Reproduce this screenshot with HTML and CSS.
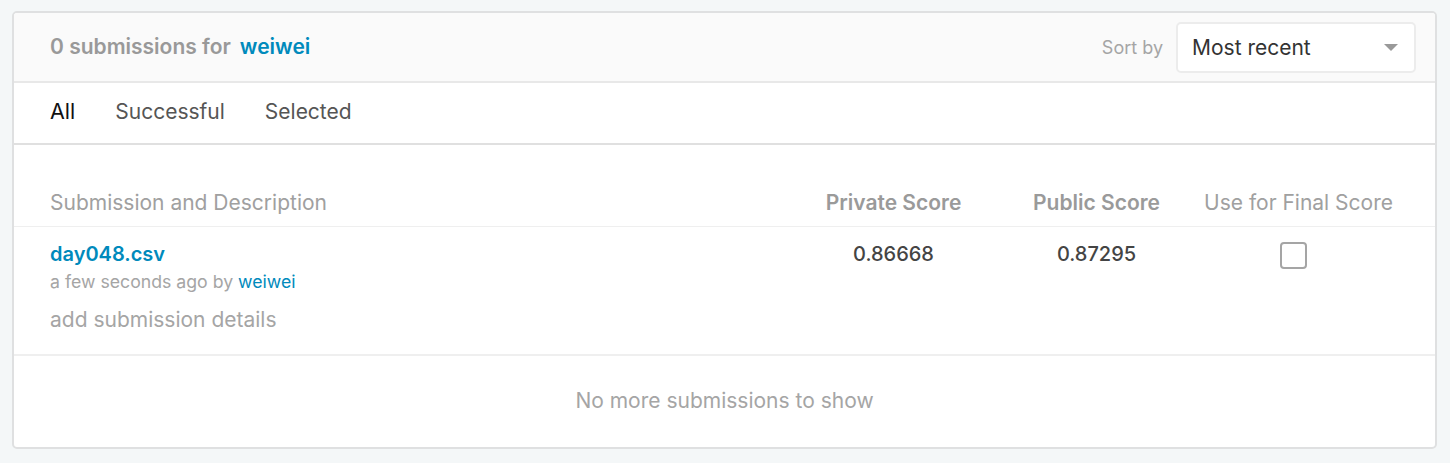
FILE: index.html
```html
<!DOCTYPE html>
<html>
<head>
<meta charset="utf-8">
<link rel="stylesheet" href="styles.css">
</head>
<body>
<div class="card">
  <div class="card-head">
    <div class="title"><span class="count">0 submissions for</span><a class="user">weiwei</a></div>
    <div class="sort">
      <span class="sort-label">Sort by</span>
      <div class="select"><span>Most recent</span><span class="caret"></span></div>
    </div>
  </div>
  <div class="tabs">
    <span class="tab active">All</span>
    <span class="tab">Successful</span>
    <span class="tab">Selected</span>
  </div>
  <div class="table">
    <div class="thead">
      <div class="c-desc">Submission and Description</div>
      <div class="c-priv strong">Private Score</div>
      <div class="c-pub strong">Public Score</div>
      <div class="c-use">Use for Final Score</div>
    </div>
    <div class="trow">
      <div class="c-desc">
        <a class="file">day048.csv</a>
        <div class="meta">a few seconds ago by <a class="metauser">weiwei</a></div>
        <div class="details">add submission details</div>
      </div>
      <div class="c-priv score">0.86668</div>
      <div class="c-pub score">0.87295</div>
      <div class="c-use"><span class="checkbox"></span></div>
    </div>
  </div>
  <div class="footer">No more submissions to show</div>
</div>
</body>
</html>
```

FILE: styles.css
```css
html, body {
  margin: 0;
  padding: 0;
  background: #f4f7f8;
  font-family: Inter, "Noto Sans", sans-serif;
}
body {
  padding: 11px 13px 12px 12px;
}
.card {
  background: #fff;
  border: 2px solid #dfe0e1;
  border-radius: 5px;
  overflow: hidden;
}
.card-head {
  height: 68px;
  background: #fafafa;
  border-bottom: 2px solid #e8e8e8;
  display: flex;
  align-items: center;
  justify-content: space-between;
  padding: 0 19px 0 36px;
}
.title {
  font-size: 21px;
  font-weight: 600;
  color: #999;
  display: flex;
  gap: 9px;
  margin-top: -2px;
}
.user { color: #008abc; }
.sort { display: flex; align-items: center; gap: 13px; }
.sort-label { color: #a5a5a5; font-size: 18px; }
.select {
  width: 240px;
  height: 51px;
  box-sizing: border-box;
  border: 2px solid #ececec;
  border-radius: 5px;
  background: #fff;
  display: flex;
  align-items: center;
  justify-content: space-between;
  padding: 0 16px 0 14px;
  font-size: 21px;
  color: #333;
}
.caret {
  width: 0; height: 0;
  border-left: 7px solid transparent;
  border-right: 7px solid transparent;
  border-top: 7px solid #999;
}
.tabs {
  height: 62px;
  box-sizing: border-box;
  padding: 0 36px 4px;
  border-bottom: 2px solid #e0e0e0;
  display: flex;
  align-items: center;
  gap: 40px;
  font-size: 21px;
  color: #555;
}
.tab.active { color: #111; font-size: 21.5px; }
.table { padding-top: 45px; }
.thead, .trow {
  display: grid;
  grid-template-columns: 1fr 203px 203px 201px;
  padding: 0 36px 0 36px;
}
.thead {
  height: 36px;
  border-bottom: 1px solid #efefef;
  font-size: 21px;
  line-height: 25px;
  color: #a0a0a0;
  align-items: start;
}
.strong { font-weight: 600; color: #9a9a9a; }
.thead .c-priv, .thead .c-pub, .thead .c-use { text-align: center; }
.trow {
  height: 129px;
  border-bottom: 2px solid #efefef;
  padding-top: 15px;
  box-sizing: border-box;
}
.file { color: #008abc; font-weight: 600; font-size: 20px; line-height: 24px; display: block; }
.meta { color: #a5a5a5; font-size: 17.7px; line-height: 22px; margin-top: 5px; }
.metauser { color: #008abc; }
.details { color: #a5a5a5; font-size: 21px; line-height: 25px; margin-top: 14px; }
.score { text-align: center; font-size: 20px; line-height: 24px; font-weight: 500; color: #444; }
.c-use { text-align: center; }
.checkbox {
  display: inline-block;
  width: 27px; height: 27px;
  box-sizing: border-box;
  border: 2px solid #a5a5a5;
  border-radius: 4px;
  margin-right: 10px;
}
.footer {
  height: 91px;
  box-sizing: border-box;
  padding-bottom: 2px;
  display: flex;
  align-items: center;
  justify-content: center;
  font-size: 21px;
  color: #a5a5a5;
}
```
